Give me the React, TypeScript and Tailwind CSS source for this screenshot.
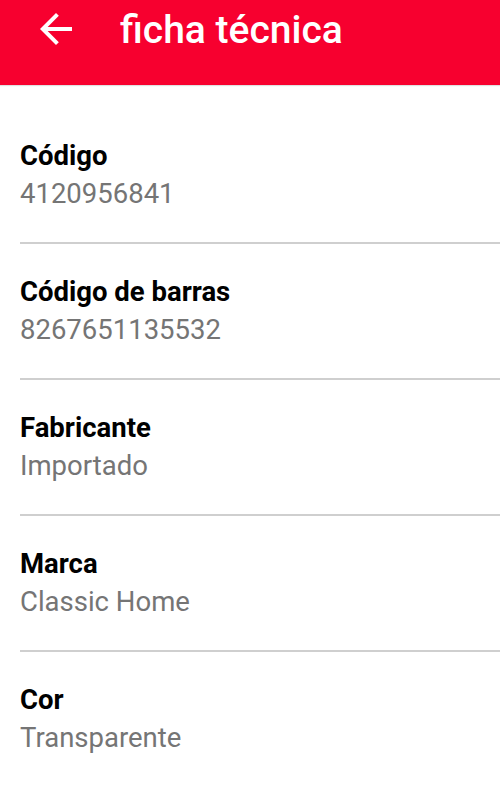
const specs = [
  { label: 'Código', value: '4120956841' },
  { label: 'Código de barras', value: '8267651135532' },
  { label: 'Fabricante', value: 'Importado' },
  { label: 'Marca', value: 'Classic Home' },
  { label: 'Cor', value: 'Transparente' },
];

function BackArrow() {
  return (
    <svg viewBox="0 0 24 24" className="h-12 w-12 fill-white" aria-hidden="true">
      <path d="M20 11H7.83l5.59-5.59L12 4l-8 8 8 8 1.41-1.41L7.83 13H20v-2z" />
    </svg>
  );
}

export default function App() {
  return (
    <div className="min-h-[802px] w-[500px] bg-white font-['Roboto',sans-serif]">
      <header className="flex h-[85px] items-start bg-[#f7002f] shadow-[0_1px_1px_rgba(0,0,0,0.12)]">
        <button className="ml-8 mt-[5px]" aria-label="Voltar">
          <BackArrow />
        </button>
        <h1 className="ml-10 mt-[8px] text-[39px] font-medium leading-[44px] text-white">ficha técnica</h1>
      </header>

      <ul className="pl-5 pt-[23px]">
        {specs.map((s, i) => (
          <li
            key={s.label}
            className={
              i < specs.length - 1
                ? 'border-b-2 border-[#cfcfcf] pb-[32px] pt-[32px]'
                : 'pb-[32px] pt-[32px]'
            }
          >
            <div className="text-[27.5px] font-bold leading-[32px] text-black">{s.label}</div>
            <div className="mt-[6px] text-[27.5px] leading-[32px] text-[#757575]">{s.value}</div>
          </li>
        ))}
      </ul>
    </div>
  );
}
